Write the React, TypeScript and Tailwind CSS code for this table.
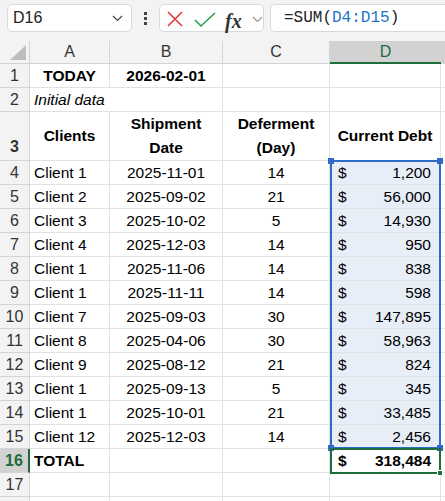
import React from 'react';

const data = [
  ['Client 1', '2025-11-01', '14', '1,200'],
  ['Client 2', '2025-09-02', '21', '56,000'],
  ['Client 3', '2025-10-02', '5', '14,930'],
  ['Client 4', '2025-12-03', '14', '950'],
  ['Client 1', '2025-11-06', '14', '838'],
  ['Client 1', '2025-11-11', '14', '598'],
  ['Client 7', '2025-09-03', '30', '147,895'],
  ['Client 8', '2025-04-06', '30', '58,963'],
  ['Client 9', '2025-08-12', '21', '824'],
  ['Client 1', '2025-09-13', '5', '345'],
  ['Client 1', '2025-10-01', '21', '33,485'],
  ['Client 12', '2025-12-03', '14', '2,456'],
];

const cell = 'border-r border-b border-[#e1e1e1] flex items-center shrink-0';

function RowHead({ n, active, align = 'center' }: { n?: number; active?: boolean; align?: 'center' | 'end' }) {
  return (
    <div
      className={`w-[30px] shrink-0 flex justify-center border-b border-r border-[#d4d4d4] text-[16px] ${
        align === 'end' ? 'items-end pb-[1px]' : 'items-center'
      } ${active ? 'bg-[#d2d2d2] text-[#1e6b3c] border-r-2 border-r-[#1e6b3c]' : 'bg-[#f3f3f3] text-[#333]'}`}
    >
      {n}
    </div>
  );
}

function FormulaBar() {
  return (
    <div className="h-[41px] bg-[#f3f3f3] flex items-start pt-[4px] overflow-hidden">
      {/* name box */}
      <div className="ml-[7px] w-[125px] h-[28px] shrink-0 rounded-[5px] border border-[#d9d9d9] bg-white flex items-center justify-between pl-[5px] pr-[8px]">
        <span className="text-[16px] text-[#222]">D16</span>
        <svg width="11" height="7" viewBox="0 0 11 7" fill="none">
          <path d="M1 1l4.5 4.5L10 1" stroke="#444" strokeWidth="1.2" />
        </svg>
      </div>
      {/* more */}
      <div className="w-[27px] h-[28px] shrink-0 flex flex-col items-center justify-center gap-[2px]">
        <span className="w-[3px] h-[3px] bg-[#444]" />
        <span className="w-[3px] h-[3px] bg-[#444]" />
        <span className="w-[3px] h-[3px] bg-[#444]" />
      </div>
      {/* buttons */}
      <div className="w-[105px] h-[28px] shrink-0 rounded-[5px] border border-[#d9d9d9] bg-white relative">
        <svg className="absolute left-0 top-0" width="105" height="28" viewBox="0 0 105 28" fill="none">
          <path d="M8 7l14 14M22 7L8 21" stroke="#e5393f" strokeWidth="1.6" />
          <path d="M35 15l6 6L55 8" stroke="#2aa150" strokeWidth="1.6" />
          <path d="M93 12l4.5 4.5L102 12" stroke="#999" strokeWidth="1.1" />
        </svg>
        <span className="absolute left-[65px] top-[1px] text-[20px] italic font-bold text-[#333]" style={{ fontFamily: '"Liberation Serif", serif' }}>
          fx
        </span>
      </div>
      {/* formula */}
      <div className="ml-[6px] w-[190px] h-[28px] shrink-0 rounded-[5px] border border-[#d9d9d9] bg-white flex items-center pl-[13px] text-[16px] text-[#222]" style={{ fontFamily: '"Liberation Mono", monospace' }}>
        =SUM(<span className="text-[#1a73c8]">D4:D15</span>)
      </div>
    </div>
  );
}

export default function App() {
  return (
    <div className="w-[445px] h-[501px] overflow-hidden bg-white" style={{ fontFamily: '"Liberation Sans", Arial, sans-serif' }}>
      <FormulaBar />
      <div className="relative text-[15.5px] text-black">
        {/* column headers */}
        <div className="flex h-[23px] bg-[#f3f3f3] text-[16px] text-[#333]">
          <div className="w-[30px] shrink-0 border-r border-b border-[#d4d4d4] relative">
            <svg className="absolute right-[3px] bottom-[3px]" width="16" height="15" viewBox="0 0 16 15">
              <path d="M16 0V15H0Z" fill="#bdbdbd" />
            </svg>
          </div>
          <div className="w-[80px] shrink-0 border-r border-b border-[#d4d4d4] flex items-center justify-center">A</div>
          <div className="w-[113px] shrink-0 border-r border-b border-[#d4d4d4] flex items-center justify-center">B</div>
          <div className="w-[107px] shrink-0 border-r border-b border-[#d4d4d4] flex items-center justify-center">C</div>
          <div className="w-[111px] shrink-0 bg-[#d2d2d2] border-b-2 border-[#1e6b3c] flex items-center justify-center text-[#1e6b3c]">D</div>
          <div className="flex-1 bg-[#d2d2d2] border-b border-[#d4d4d4]" />
        </div>

        {/* row 1 */}
        <div className="flex h-[24px]">
          <RowHead n={1} />
          <div className={`${cell} w-[80px] justify-center font-bold`}>TODAY</div>
          <div className={`${cell} w-[113px] justify-center font-bold`}>2026-02-01</div>
          <div className={`${cell} w-[107px]`} />
          <div className={`${cell} w-[111px]`} />
          <div className="flex-1 border-b border-[#e1e1e1]" />
        </div>

        {/* row 2 */}
        <div className="flex h-[24px]">
          <RowHead n={2} />
          <div className="w-[193px] shrink-0 border-r border-b border-[#e1e1e1] flex items-center pl-[4px] italic">Initial data</div>
          <div className={`${cell} w-[107px]`} />
          <div className={`${cell} w-[111px]`} />
          <div className="flex-1 border-b border-[#e1e1e1]" />
        </div>

        {/* row 3 */}
        <div className="flex h-[49px] font-bold leading-[24px]">
          <RowHead n={3} align="end" />
          <div className={`${cell} w-[80px] justify-center`}>Clients</div>
          <div className={`${cell} w-[113px] justify-center text-center`}>Shipment<br />Date</div>
          <div className={`${cell} w-[107px] justify-center text-center`}>Deferment<br />(Day)</div>
          <div className={`${cell} w-[111px] justify-center`}>Current Debt</div>
          <div className="flex-1 border-b border-[#e1e1e1]" />
        </div>

        {/* data rows */}
        {data.map((r, i) => (
          <div key={i} className="flex h-[24px]">
            <RowHead n={i + 4} />
            <div className={`${cell} w-[80px] pl-[4px]`}>{r[0]}</div>
            <div className={`${cell} w-[113px] justify-center`}>{r[1]}</div>
            <div className={`${cell} w-[107px] justify-center`}>{r[2]}</div>
            <div className={`${cell} w-[111px] justify-between pl-[8px] pr-[9px] bg-[#e8eef8] border-[#d6dbe4]`}>
              <span>$</span>
              <span>{r[3]}</span>
            </div>
            <div className="flex-1 border-b border-[#e1e1e1]" />
          </div>
        ))}

        {/* row 16 */}
        <div className="flex h-[24px] font-bold">
          <RowHead n={16} active />
          <div className={`${cell} w-[80px] pl-[4px]`}>TOTAL</div>
          <div className={`${cell} w-[113px]`} />
          <div className={`${cell} w-[107px]`} />
          <div className={`${cell} w-[111px] justify-between pl-[8px] pr-[9px]`}>
            <span>$</span>
            <span>318,484</span>
          </div>
          <div className="flex-1 border-b border-[#e1e1e1]" />
        </div>

        {/* rows 17-18 */}
        {[17, 18].map((n) => (
          <div key={n} className="flex h-[24px]">
            <RowHead n={n === 17 ? n : undefined} />
            <div className={`${cell} w-[80px]`} />
            <div className={`${cell} w-[113px]`} />
            <div className={`${cell} w-[107px]`} />
            <div className={`${cell} w-[111px]`} />
            <div className="flex-1 border-b border-[#e1e1e1]" />
          </div>
        ))}

        {/* selection D4:D15 */}
        <div className="absolute left-[330px] top-[119px] w-[111px] h-[289px] border-2 border-[#2f6ac6] pointer-events-none">
          <span className="absolute -left-[4px] -top-[4px] w-[6px] h-[6px] bg-[#2f6ac6]" />
          <span className="absolute -right-[4px] -top-[4px] w-[6px] h-[6px] bg-[#2f6ac6]" />
          <span className="absolute -left-[4px] -bottom-[4px] w-[6px] h-[6px] bg-[#2f6ac6]" />
          <span className="absolute -right-[4px] -bottom-[4px] w-[6px] h-[6px] bg-[#2f6ac6]" />
        </div>
        {/* active cell D16 */}
        <div className="absolute left-[330px] top-[407px] w-[111px] h-[26px] border-2 border-[#1e6b3c] pointer-events-none">
          <span className="absolute -right-[4px] -bottom-[4px] w-[6px] h-[6px] bg-[#1e6b3c] border border-white" />
        </div>
      </div>
    </div>
  );
}
